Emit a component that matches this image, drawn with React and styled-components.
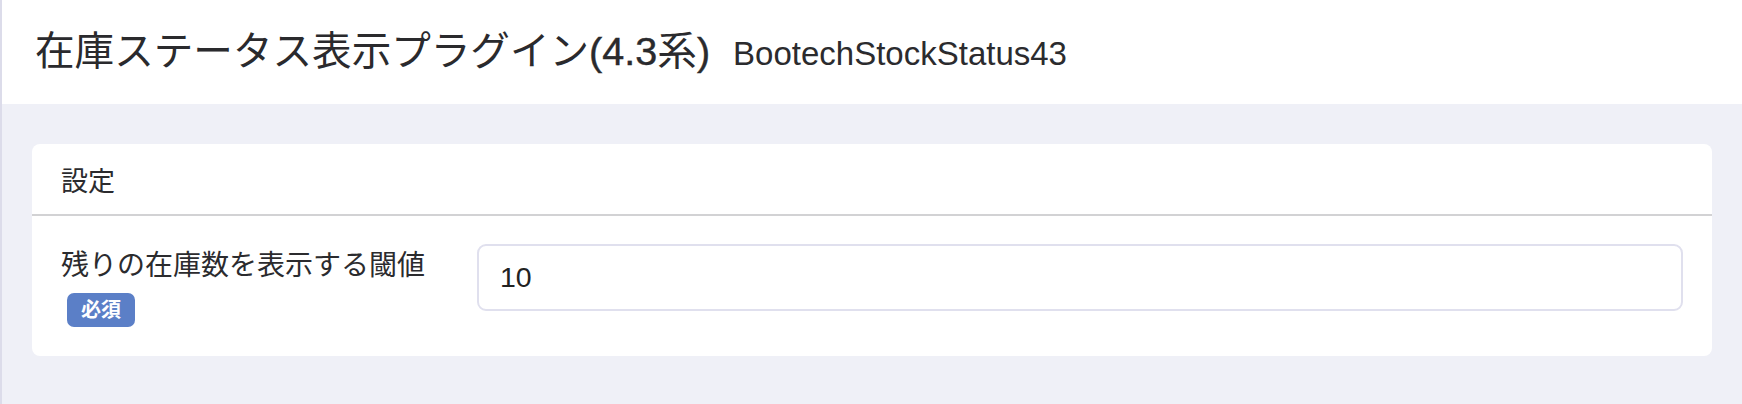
import styled, { createGlobalStyle } from "styled-components";

const GlobalStyle = createGlobalStyle`
  html, body {
    margin: 0;
    padding: 0;
    background: #eff0f7;
  }
  body {
    font-family: "Liberation Sans", "Noto Sans CJK JP", sans-serif;
    color: #2b2b2e;
  }
`;

const Page = styled.div`
  min-height: 100vh;
  border-left: 2px solid #dcdcea;
  background: #eff0f7;
`;

const Header = styled.header`
  display: flex;
  align-items: center;
  height: 104px;
  padding: 0 33px;
  background: #fff;
`;

const PageTitle = styled.h1`
  margin: 0;
  font-size: 39.6px;
  font-weight: 400;
  line-height: 1.2;
  color: #2a2a2d;
`;

// the version digits read a bit heavier than the kana in the original
const Version = styled.span`
  font-weight: 500;
  -webkit-text-stroke: 0.4px #2a2a2d;
`;

const SubTitle = styled.span`
  margin-left: 23px;
  font-size: 33px;
  color: #2b2b2e;
`;

const Main = styled.main`
  padding: 40px 30px 0;
`;

const Card = styled.section`
  background: #fff;
  border-radius: 8px;
`;

const CardHeader = styled.div`
  display: flex;
  align-items: center;
  height: 70px;
  padding: 0 29px;
  border-bottom: 2px solid #d2d2d4;
  font-size: 27px;
`;

const CardBody = styled.div`
  padding: 28px 29px 29px;
`;

const FormRow = styled.div`
  display: grid;
  grid-template-columns: 416px 1fr;
  align-items: start;
`;

const LabelCol = styled.div`
  display: flex;
  flex-direction: column;
  align-items: flex-start;
`;

const Label = styled.label`
  font-size: 28px;
  line-height: 44px;
`;

const Badge = styled.span`
  margin: 5px 0 0 6px;
  height: 34px;
  padding: 0 14px;
  border-radius: 7px;
  background: #5b7fc7;
  color: #fff;
  font-size: 20px;
  font-weight: 700;
  line-height: 34px;
`;

const Input = styled.input`
  box-sizing: border-box;
  width: 100%;
  height: 67px;
  padding: 0 21px;
  border: 2px solid #e0e0ee;
  border-radius: 9px;
  background: #fff;
  font-family: inherit;
  font-size: 28.5px;
  color: #222;
  outline: none;
`;

export default function App() {
  return (
    <Page>
      <GlobalStyle />
      <Header>
        <PageTitle>
          在庫ステータス表示プラグイン<Version>(4.3</Version>系<Version>)</Version>
          <SubTitle>BootechStockStatus43</SubTitle>
        </PageTitle>
      </Header>
      <Main>
        <Card>
          <CardHeader>設定</CardHeader>
          <CardBody>
            <FormRow>
              <LabelCol>
                <Label htmlFor="threshold">残りの在庫数を表示する閾値</Label>
                <Badge>必須</Badge>
              </LabelCol>
              <Input id="threshold" type="text" defaultValue="10" />
            </FormRow>
          </CardBody>
        </Card>
      </Main>
    </Page>
  );
}
